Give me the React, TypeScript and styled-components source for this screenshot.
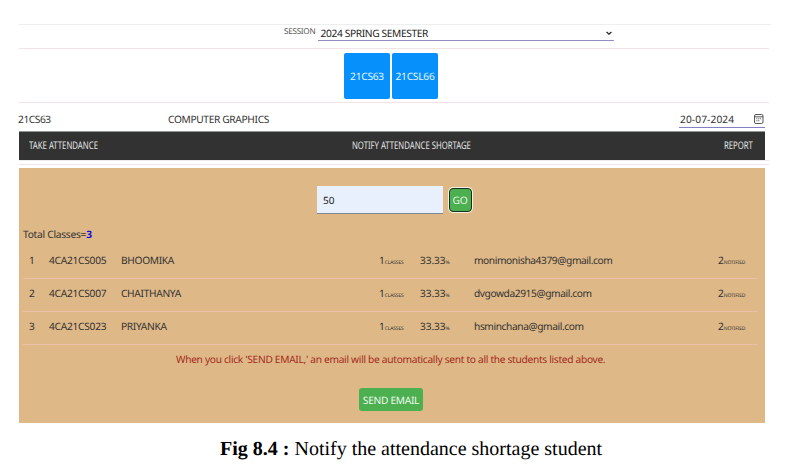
import React from 'react';
import styled, { createGlobalStyle } from 'styled-components';

const GlobalStyle = createGlobalStyle`
  * { box-sizing: border-box; }
  body { margin: 0; background: #fff; font-family: "Noto Sans", "Open Sans", sans-serif; text-rendering: geometricPrecision; }
  button, input, select { font-family: inherit; text-rendering: inherit; }
`;

const Page = styled.main`
  width: 791px;
  height: 473px;
  padding: 24px 0 0 19px;
  overflow: hidden;
  background: #fff;
  color: #333;
  font-size: 10.2px;
  white-space: nowrap;
`;

const SessionBar = styled.section`
  display: flex;
  width: 752px;
  height: 24px;
  padding-left: 265px;
  border-top: 1px solid #eeeeee;
`;

const SessionLabel = styled.label`
  width: 34px;
  font-size: 8.2px;
  line-height: 13px;
  letter-spacing: -0.3px;
  color: #555;
`;

const SessionSelect = styled.div`
  display: flex;
  justify-content: space-between;
  width: 296px;
  height: 16px;
  padding: 0 2px 0 2.5px;
  border-bottom: 1px solid #8e8ec4;
  line-height: 17px;
  letter-spacing: -0.36px;
  color: #222;

  svg { margin-top: 5px; }
`;

const SubjectBar = styled.section`
  display: flex;
  justify-content: center;
  gap: 2.5px;
  width: 750px;
  height: 54px;
  padding: 4px 6px 0 0;
  border-top: 1px solid #f3e3e6;
`;

const SubjectButton = styled.button`
  width: 45.5px;
  height: 45.5px;
  padding: 0;
  border: 0;
  border-radius: 2px;
  background: #0590fc;
  color: #e9f6ff;
  font-size: 10.2px;
  letter-spacing: -0.25px;
`;

const CourseBar = styled.section`
  display: flex;
  width: 750px;
  height: 29px;
  border-top: 1px solid #f3e3e6;
  line-height: 33px;
`;

const CourseCode = styled.span`
  width: 149px;
  text-indent: -1px;
  letter-spacing: -0.45px;
`;

const CourseName = styled.span`
  width: 511px;
  letter-spacing: -0.34px;
`;

const DateField = styled.div`
  display: flex;
  justify-content: space-between;
  width: 86px;
  height: 25px;
  padding: 0 1px;
  border-bottom: 1px solid #8181c4;
  letter-spacing: 0.1px;

  svg { margin-top: 11px; }
`;

const NavBar = styled.nav`
  display: flex;
  justify-content: space-between;
  width: 746px;
  height: 29px;
  padding: 0 13px 0 10px;
  border-top: 1px solid #8f9691;
  background: #323232;
  color: #e4e4e4;
  line-height: 29px;
`;

const NavItem = styled.a<{ $width: number; $scale: number }>`
  width: ${p => p.$width}px;
  font-size: 10.5px;

  span {
    display: inline-block;
    transform: scaleX(${p => p.$scale});
    transform-origin: left;
  }
`;

const Divider = styled.div`
  width: 750px;
  height: 8px;
  padding-top: 3px;
  border-top: 1px solid #ececec;

  &::after {
    content: "";
    display: block;
    height: 1px;
    background: #f3e3e6;
  }
`;

const Panel = styled.section`
  display: flex;
  flex-direction: column;
  width: 746px;
  height: 255px;
  background: #deb887;
`;

const SearchForm = styled.div`
  display: flex;
  gap: 5.5px;
  padding: 18px 0 0 298px;
`;

const Threshold = styled.input`
  width: 126px;
  height: 28px;
  padding: 0 6px;
  border: 0;
  border-bottom: 1px solid #7f8790;
  border-radius: 0;
  outline: 0;
  background: #e8f0fe;
  color: #222;
  font-size: 10px;
`;

const GoButton = styled.button`
  width: 23px;
  height: 24px;
  margin: 2px 0 0 0;
  padding: 1px 0 0;
  border: 1.5px solid #16301a;
  border-radius: 4px;
  background: #4caf50;
  box-shadow: 0 0 0 1px #f5efe4;
  color: #e2f3e2;
  font-size: 10.3px;
  letter-spacing: -0.2px;
`;

const Total = styled.p`
  height: 20px;
  margin: 12px 0 0 4px;
  line-height: 17px;
  letter-spacing: -0.26px;

  b { color: #1208e0; }
`;

const StudentRow = styled.div`
  display: grid;
  grid-template-columns: 26px 72px 258px 41px 54px 244px 1fr;
  width: 735px;
  height: 33px;
  margin-left: 4px;
  border-bottom: 1px solid #ecbfa6;
  line-height: 29px;
`;

const Cell = styled.span<{ $spacing?: number; $indent?: number }>`
  padding-left: ${p => p.$indent ?? 0}px;
  letter-spacing: ${p => p.$spacing ?? -0.1}px;
`;

const Unit = styled.small`
  font-size: 5px;
  letter-spacing: -0.15px;
`;

const Notice = styled.p`
  margin: 0;
  padding-left: 157px;
  line-height: 28px;
  letter-spacing: -0.305px;
  color: #a52a1e;
`;

const SendButton = styled.button`
  width: 64px;
  height: 23px;
  margin: 15px 0 0 340px;
  padding: 0;
  border: 0;
  border-radius: 3px;
  background: #4caf50;
  color: #f0faf0;
  font-size: 10.2px;
  letter-spacing: -0.3px;
`;

const Caption = styled.p`
  margin: 0;
  padding: 15px 0 0 201px;
  font-family: "Liberation Serif", serif;
  font-size: 20px;
  line-height: 22px;
  color: #000;
`;

const students = [
  { usn: '4CA21CS005', name: 'BHOOMIKA', email: 'monimonisha4379@gmail.com' },
  { usn: '4CA21CS007', name: 'CHAITHANYA', email: 'dvgowda2915@gmail.com' },
  { usn: '4CA21CS023', name: 'PRIYANKA', email: 'hsminchana@gmail.com' },
];

const Chevron = () => (
  <svg width="6" height="6" viewBox="0 0 6 6" fill="none" stroke="#222" strokeWidth="1.3">
    <path d="M.6 2 3 4.2 5.4 2" />
  </svg>
);

const CalendarIcon = () => (
  <svg width="10" height="10" viewBox="0 0 10 10" fill="none" stroke="#444" strokeWidth=".9">
    <rect x=".5" y=".5" width="8.5" height="9" rx="1.5" />
    <path d="M.5 2.8H9" />
    <path d="M2.4 4.8h1M4.3 4.8h1M6.2 4.8h1M2.4 6.7h1M4.3 6.7h1" strokeWidth="1.1" />
  </svg>
);

export default function App() {
  return (
    <>
      <GlobalStyle />
      <Page>
        <SessionBar>
          <SessionLabel>SESSION</SessionLabel>
          <SessionSelect>
            <span>2024 SPRING SEMESTER</span>
            <Chevron />
          </SessionSelect>
        </SessionBar>
        <SubjectBar>
          <SubjectButton>21CS63</SubjectButton>
          <SubjectButton>21CSL66</SubjectButton>
        </SubjectBar>
        <CourseBar>
          <CourseCode>21CS63</CourseCode>
          <CourseName>COMPUTER GRAPHICS</CourseName>
          <DateField>
            <span>20-07-2024</span>
            <CalendarIcon />
          </DateField>
        </CourseBar>
        <NavBar>
          <NavItem $width={69} $scale={0.74}><span>TAKE ATTENDANCE</span></NavItem>
          <NavItem $width={119} $scale={0.735}><span>NOTIFY ATTENDANCE SHORTAGE</span></NavItem>
          <NavItem $width={28} $scale={0.735}><span>REPORT</span></NavItem>
        </NavBar>
        <Divider />
        <Panel>
          <SearchForm>
            <Threshold defaultValue="50" />
            <GoButton>GO</GoButton>
          </SearchForm>
          <Total>Total Classes=<b>3</b></Total>
          {students.map((s, i) => (
            <StudentRow key={s.usn}>
              <Cell $indent={6}>{i + 1}</Cell>
              <Cell $spacing={-0.27}>{s.usn}</Cell>
              <Cell $spacing={-0.32}>{s.name}</Cell>
              <Cell>1<Unit>CLASSES</Unit></Cell>
              <Cell>33.33<Unit>%</Unit></Cell>
              <Cell $spacing={-0.41}>{s.email}</Cell>
              <Cell>2<Unit>NOTIFIED</Unit></Cell>
            </StudentRow>
          ))}
          <Notice>When you click 'SEND EMAIL,' an email will be automatically sent to all the students listed above.</Notice>
          <SendButton>SEND EMAIL</SendButton>
        </Panel>
        <Caption><b>Fig 8.4 :</b> Notify the attendance shortage student</Caption>
      </Page>
    </>
  );
}
